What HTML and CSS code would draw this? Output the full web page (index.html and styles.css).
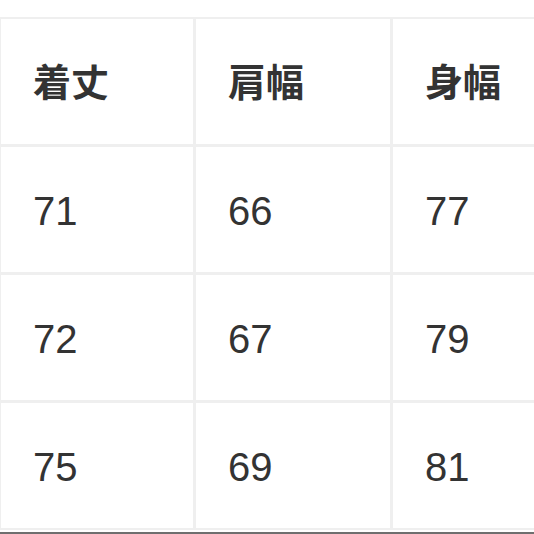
FILE: index.html
```html
<!DOCTYPE html>
<html lang="ja">
<head>
<meta charset="utf-8">
<link rel="stylesheet" href="styles.css">
</head>
<body>
<div class="page">
  <div class="clip">
    <div class="table">
      <div class="cell head">着丈</div>
      <div class="cell head">肩幅</div>
      <div class="cell head">身幅</div>
      <div class="cell">71</div>
      <div class="cell">66</div>
      <div class="cell">77</div>
      <div class="cell">72</div>
      <div class="cell">67</div>
      <div class="cell">79</div>
      <div class="cell">75</div>
      <div class="cell">69</div>
      <div class="cell">81</div>
    </div>
  </div>
  <div class="bottom-line"></div>
</div>
</body>
</html>
```
FILE: styles.css
```css
html, body {
  margin: 0;
  padding: 0;
  background: #ffffff;
  overflow: hidden;
  width: 534px;
  height: 534px;
}
.page {
  padding-top: 17px;
  width: 534px;
  height: 534px;
  box-sizing: border-box;
  display: flex;
  flex-direction: column;
}
.clip {
  width: 534px;
  overflow: hidden;
}
.table {
  display: grid;
  grid-template-columns: 192px 194px 194px;
  grid-auto-rows: 125px;
  gap: 3px;
  padding: 2px 0 2px 1px;
  background: #efefef;
  width: max-content;
}
.cell {
  background: #ffffff;
  display: flex;
  align-items: center;
  padding-left: 32px;
  padding-top: 4px;
  box-sizing: border-box;
  font-family: "Liberation Sans", Arial, sans-serif;
  font-size: 40px;
  color: #333333;
}
.head {
  font-family: "Noto Sans CJK JP", "Noto Sans", sans-serif;
  font-weight: 700;
  font-size: 38px;
  padding-top: 0;
  padding-bottom: 4px;
}
.bottom-line {
  margin-top: auto;
  height: 2px;
  background: #6f6f6f;
}
```
